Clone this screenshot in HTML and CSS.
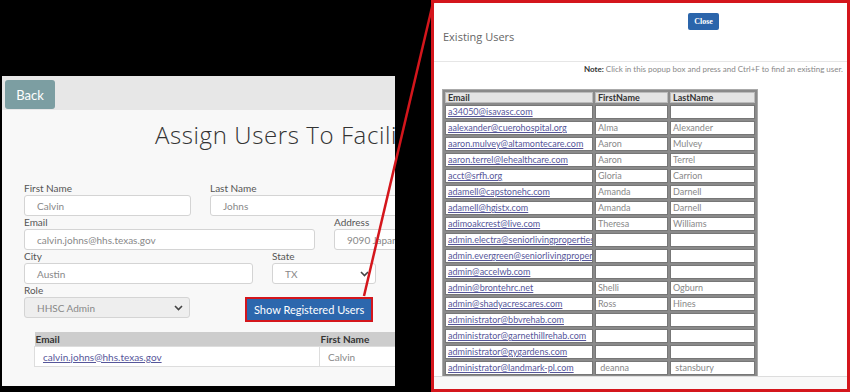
FILE: index.html
```html
<!DOCTYPE html>
<html>

<head>
    <link rel="stylesheet" href="styles.css">
</head>

<body>
    <div class="canvas">
        <div class="page-shot">
            <div class="top-bar">
                <button class="back-btn">Back</button>
            </div>

            <h1 class="page-title">Assign Users To Facilities</h1>

            <div class="form">
                <div class="form-row">
                    <div class="field w-first">
                        <label>First Name</label>
                        <div class="input">Calvin</div>
                    </div>
                    <div class="field w-last">
                        <label>Last Name</label>
                        <div class="input">Johns</div>
                    </div>
                </div>
                <div class="form-row">
                    <div class="field w-email">
                        <label>Email</label>
                        <div class="input">calvin.johns@hhs.texas.gov</div>
                    </div>
                    <div class="field w-address">
                        <label>Address</label>
                        <div class="input">9090 Japan Avenue</div>
                    </div>
                </div>
                <div class="form-row">
                    <div class="field w-city">
                        <label>City</label>
                        <div class="input">Austin</div>
                    </div>
                    <div class="field w-state">
                        <label>State</label>
                        <div class="input select">
                            <span>TX</span>
                            <svg class="chevron" width="9" height="6" viewBox="0 0 9 6"><path d="M1 1l3.5 3.5L8 1" fill="none" stroke="#444" stroke-width="1.6"/></svg>
                        </div>
                    </div>
                </div>
                <div class="form-row">
                    <div class="field w-role">
                        <label>Role</label>
                        <div class="input select disabled">
                            <span>HHSC Admin</span>
                            <svg class="chevron" width="9" height="6" viewBox="0 0 9 6"><path d="M1 1l3.5 3.5L8 1" fill="none" stroke="#444" stroke-width="1.6"/></svg>
                        </div>
                    </div>
                    <div class="field btn-field">
                        <button class="show-btn">Show Registered Users</button>
                    </div>
                </div>
            </div>

            <table class="assigned">
                <tr>
                    <th class="col-email">Email</th>
                    <th>First Name</th>
                </tr>
                <tr>
                    <td class="col-email"><a href="#">calvin.johns@hhs.texas.gov</a></td>
                    <td>Calvin</td>
                </tr>
            </table>
        </div>

        <div class="popup">
            <div class="popup-header">
                <button class="close-btn">Close</button>
                <h2 class="popup-title">Existing Users</h2>
            </div>
            <div class="popup-body">
                <p class="note"><b>Note:</b> Click in this popup box and press and Ctrl+F to find an existing user.</p>
                <table class="users">
                    <colgroup>
                        <col class="c-email">
                        <col class="c-first">
                        <col class="c-last">
                    </colgroup>
                    <tr><th>Email</th><th>FirstName</th><th>LastName</th></tr>
                    <tr><td><a href="#">a34050@isavasc.com</a></td><td></td><td></td></tr>
                    <tr><td><a href="#">aalexander@cuerohospital.org</a></td><td>Alma</td><td>Alexander</td></tr>
                    <tr><td><a href="#">aaron.mulvey@altamontecare.com</a></td><td>Aaron</td><td>Mulvey</td></tr>
                    <tr><td><a href="#">aaron.terrel@lehealthcare.com</a></td><td>Aaron</td><td>Terrel</td></tr>
                    <tr><td><a href="#">acct@srfh.org</a></td><td>Gloria</td><td>Carrion</td></tr>
                    <tr><td><a href="#">adamell@capstonehc.com</a></td><td>Amanda</td><td>Darnell</td></tr>
                    <tr><td><a href="#">adamell@hgistx.com</a></td><td>Amanda</td><td>Darnell</td></tr>
                    <tr><td><a href="#">adimoakcrest@live.com</a></td><td>Theresa</td><td>Williams</td></tr>
                    <tr><td><a href="#">admin.electra@seniorlivingproperties.com</a></td><td></td><td></td></tr>
                    <tr><td><a href="#">admin.evergreen@seniorlivingproperties.com</a></td><td></td><td></td></tr>
                    <tr><td><a href="#">admin@accelwb.com</a></td><td></td><td></td></tr>
                    <tr><td><a href="#">admin@brontehrc.net</a></td><td>Shelli</td><td>Ogburn</td></tr>
                    <tr><td><a href="#">admin@shadyacrescares.com</a></td><td>Ross</td><td>Hines</td></tr>
                    <tr><td><a href="#">administrator@bbvrehab.com</a></td><td></td><td></td></tr>
                    <tr><td><a href="#">administrator@garnethillrehab.com</a></td><td></td><td></td></tr>
                    <tr><td><a href="#">administrator@gygardens.com</a></td><td></td><td></td></tr>
                    <tr><td><a href="#">administrator@landmark-pl.com</a></td><td>&nbsp;deanna</td><td>&nbsp;stansbury</td></tr>
                </table>
            </div>
            <div class="popup-footer"></div>
        </div>

        <svg class="connector" width="850" height="392" viewBox="0 0 850 392">
            <line x1="364" y1="296" x2="433" y2="3" stroke="#d4161c" stroke-width="2.5"/>
        </svg>
    </div>
</body>

</html>
```

FILE: styles.css
```css
body {
    margin: 0;
    background-color: #000;
    font-family: Lato, "Open Sans", sans-serif;
}

.canvas {
    position: relative;
    width: 850px;
    height: 392px;
    overflow: hidden;
}

/* left: the page behind the popup */
.page-shot {
    position: absolute;
    left: 2px;
    top: 76px;
    width: 393px;
    height: 310px;
    overflow: hidden;
    background-color: #f8f8f8;
}

.top-bar {
    height: 34px;
    box-sizing: border-box;
    padding: 4px 3px 0;
    background-color: #e7e7e7;
}

.back-btn {
    width: 50px;
    height: 29px;
    border: none;
    border-radius: 3px;
    background-color: #7c9ea2;
    color: #fff;
    font-family: Lato, sans-serif;
    font-size: 13px;
}

.page-title {
    margin: 10px 0 0;
    padding-left: 153px;
    white-space: nowrap;
    font-family: "Open Sans", sans-serif;
    font-weight: 300;
    font-size: 24px;
    line-height: 30px;
    letter-spacing: 0.6px;
    color: #333;
}

.form {
    margin-top: 32px;
    padding-left: 22px;
}

.form-row {
    display: flex;
    gap: 19px;
}

.field {
    flex-shrink: 0;
}

.field label {
    display: block;
    height: 12px;
    margin-bottom: 1px;
    font-size: 10px;
    line-height: 12px;
    color: #555;
}

.input {
    box-sizing: border-box;
    height: 21px;
    padding: 0 12px;
    display: flex;
    align-items: center;
    background-color: #fff;
    border: 1px solid #d4d4d4;
    border-radius: 3px;
    font-size: 10px;
    color: #888;
    white-space: nowrap;
    overflow: hidden;
}

.select {
    justify-content: space-between;
    padding-right: 6px;
}

.disabled {
    background-color: #eee;
}

.w-first { width: 167px; }
.w-last { width: 200px; }
.w-email { width: 291px; }
.w-address { width: 150px; }
.w-city { width: 229px; }
.w-state { width: 104px; }
.w-role { width: 166px; }

.btn-field {
    padding-top: 13px;
    margin-left: 36px;
}

.show-btn {
    height: 25px;
    padding: 0 7px;
    border: 2px solid #d4161c;
    background-color: #2c67ad;
    color: #fff;
    font-family: Lato, sans-serif;
    font-size: 11px;
}

.assigned {
    margin: 10px 0 0 32px;
    border-collapse: collapse;
    width: 420px;
    font-size: 10px;
}

.assigned th {
    height: 14px;
    padding: 0 1px;
    background-color: #cdcdcd;
    color: #333;
    text-align: left;
}

.assigned td {
    height: 19px;
    padding: 0 8px;
    background-color: #fff;
    border: 1px solid #ddd;
    color: #888;
}

.assigned .col-email {
    width: 285px;
    box-sizing: border-box;
}

a {
    color: #56569a;
}

/* right: the popup */
.popup {
    position: absolute;
    left: 431px;
    top: 0;
    width: 419px;
    height: 392px;
    box-sizing: border-box;
    border: 3px solid #d4161c;
    background-color: #fff;
    display: flex;
    flex-direction: column;
}

.popup-header {
    height: 59px;
    box-sizing: border-box;
    padding: 10px 0 0 9px;
    border-bottom: 1px solid #e6e6e6;
}

.close-btn {
    display: block;
    margin-left: 245px;
    width: 31px;
    height: 17px;
    padding: 0;
    border: none;
    border-radius: 2px;
    background-color: #2b65ab;
    color: #fff;
    font-family: "Liberation Serif", serif;
    font-weight: bold;
    font-size: 8px;
}

.popup-title {
    margin: 0;
    font-family: "Open Sans", sans-serif;
    font-weight: 400;
    font-size: 11px;
    line-height: 14px;
    color: #666;
}

.popup-body {
    height: 314px;
    flex-shrink: 0;
    overflow: hidden;
    border-bottom: 1px solid #ddd;
}

.note {
    margin: 2px 4px 0 0;
    text-align: right;
    font-size: 8px;
    line-height: 10px;
    color: #888;
}

.note b {
    color: #333;
}

.users {
    margin: 15px 0 0 8px;
    width: 316px;
    table-layout: fixed;
    border-collapse: separate;
    border-spacing: 2px;
    border: 1px solid #aaa;
    background-color: #8a8a8a;
    font-size: 9px;
}

.c-email { width: 148px; }
.c-first { width: 73px; }
.c-last { width: 85px; }

.users th,
.users td {
    padding: 0 2px;
    white-space: nowrap;
    overflow: hidden;
    text-align: left;
}

.users th {
    height: 9px;
    border: 1px solid #bbb;
    background-color: #e4e4e4;
    color: #333;
    line-height: 9px;
}

.users td {
    height: 12px;
    border: 1px solid #777;
    background-color: #fff;
    color: #888;
    line-height: 12px;
}

.popup-footer {
    flex: 1;
    background-color: #f8f8f8;
}

.connector {
    position: absolute;
    left: 0;
    top: 0;
    pointer-events: none;
}
```
